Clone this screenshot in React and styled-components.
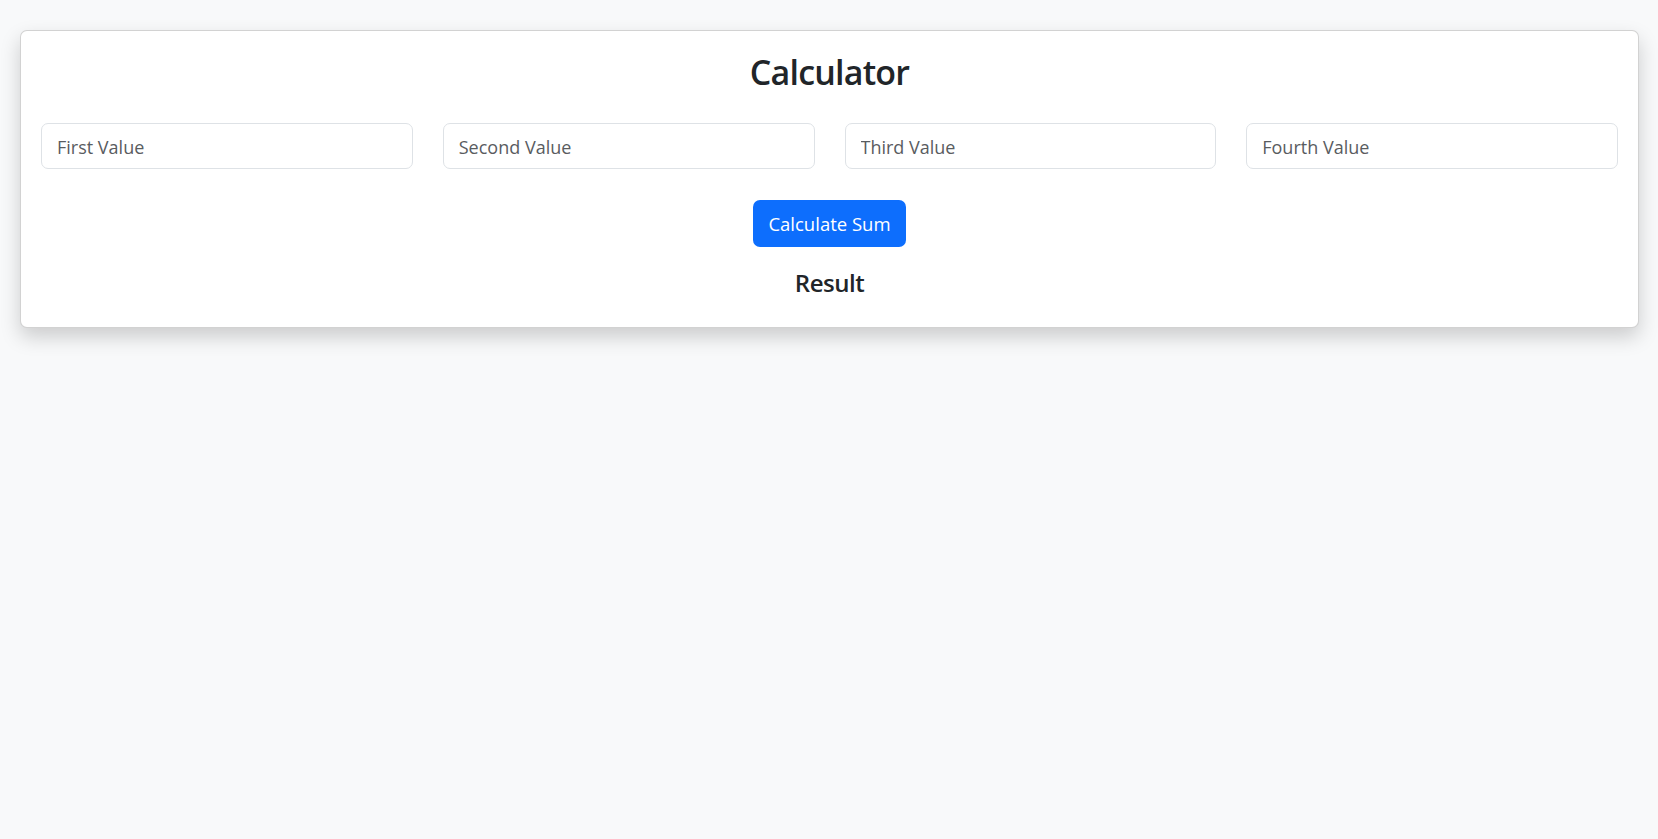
import React, { useState } from "react";
import styled, { createGlobalStyle } from "styled-components";

const GlobalStyle = createGlobalStyle`
  html, body {
    margin: 0;
    padding: 0;
    background-color: #f8f9fa;
    font-family: "Open Sans", "Noto Sans", Arial, sans-serif;
    color: #212529;
  }
`;

const Page = styled.div`
  padding: 30px 19px 40px 20px;
`;

const Card = styled.div`
  background-color: #fff;
  border: 1px solid rgba(0, 0, 0, 0.175);
  border-radius: 7px;
  box-shadow: 0 9px 20px rgba(0, 0, 0, 0.18);
  padding: 20px;
  display: flex;
  flex-direction: column;
  align-items: center;
`;

const Title = styled.h2`
  margin: 0 0 30px;
  font-size: 34px;
  font-weight: 600;
  line-height: 42px;
  letter-spacing: -0.8px;
`;

const InputRow = styled.div`
  width: 100%;
  display: grid;
  grid-template-columns: repeat(4, 1fr);
  gap: 30px;
  margin-bottom: 31px;
`;

const Field = styled.input`
  box-sizing: border-box;
  width: 100%;
  height: 46px;
  padding: 2px 15px 0;
  border: 1px solid #dee2e6;
  border-radius: 7px;
  font-family: inherit;
  font-size: 18px;
  color: #212529;
  background: #fff;
  outline: none;

  &::placeholder {
    color: #595c5f;
  }
`;

const SumButton = styled.button`
  height: 47px;
  padding: 0 15px;
  border: none;
  border-radius: 7px;
  background-color: #0d6efd;
  color: #fff;
  font-family: inherit;
  font-size: 18.5px;
  cursor: pointer;
`;

const Result = styled.h4`
  margin: 21px 0 9px;
  font-size: 24px;
  font-weight: 600;
  line-height: 30px;
  letter-spacing: -0.5px;
`;

const labels = ["First Value", "Second Value", "Third Value", "Fourth Value"];

export default function App() {
  const [values, setValues] = useState(["", "", "", ""]);
  const [sum, setSum] = useState(null);

  const update = (i, v) => {
    const next = [...values];
    next[i] = v;
    setValues(next);
  };

  const calculate = () => {
    setSum(values.reduce((acc, v) => acc + (parseFloat(v) || 0), 0));
  };

  return (
    <>
      <GlobalStyle />
      <Page>
        <Card>
          <Title>Calculator</Title>
          <InputRow>
            {labels.map((label, i) => (
              <Field
                key={label}
                type="number"
                placeholder={label}
                value={values[i]}
                onChange={(e) => update(i, e.target.value)}
              />
            ))}
          </InputRow>
          <SumButton onClick={calculate}>Calculate Sum</SumButton>
          <Result>Result{sum !== null ? `: ${sum}` : ""}</Result>
        </Card>
      </Page>
    </>
  );
}
